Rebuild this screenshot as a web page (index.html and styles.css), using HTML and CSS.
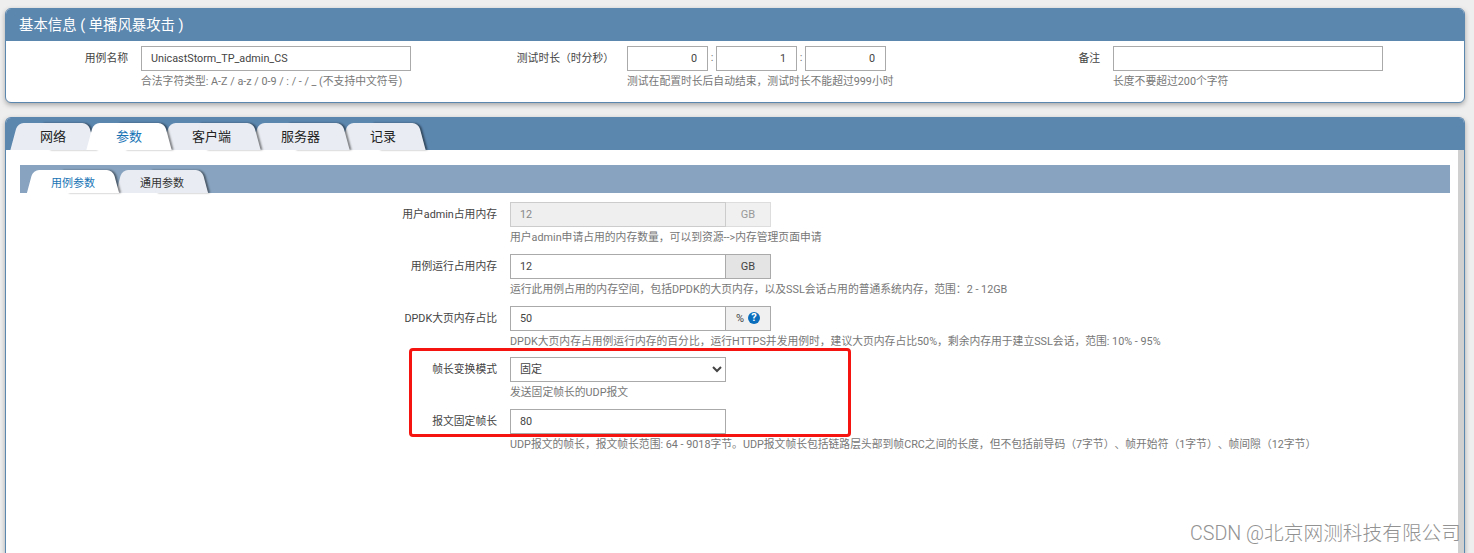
FILE: index.html
```html
<!DOCTYPE html>
<html lang="zh-CN">
<head>
    <meta charset="UTF-8">
    <meta name="viewport" content="width=device-width, initial-scale=1.0">
    <title>基本信息</title>
    <link rel="stylesheet" href="styles.css">
</head>
<body>
    <div class="card">
        <div class="card-title">基本信息 ( 单播风暴攻击 )</div>
        <div class="info-grid">
            <div class="info-field">
                <label class="info-label">用例名称</label>
                <input class="text-input" type="text" value="UnicastStorm_TP_admin_CS">
                <div class="help">合法字符类型: A-Z / a-z / 0-9 / : / - / _ (不支持中文符号)</div>
            </div>
            <div class="info-field">
                <label class="info-label">测试时长（时分秒）</label>
                <div class="time-group">
                    <input class="text-input time-input" type="text" value="0">
                    <span class="time-sep">:</span>
                    <input class="text-input time-input" type="text" value="1">
                    <span class="time-sep">:</span>
                    <input class="text-input time-input" type="text" value="0">
                </div>
                <div class="help">测试在配置时长后自动结束，测试时长不能超过999小时</div>
            </div>
            <div class="info-field">
                <label class="info-label">备注</label>
                <input class="text-input" type="text">
                <div class="help">长度不要超过200个字符</div>
            </div>
        </div>
    </div>

    <div class="card main-card">
        <div class="tabs">
            <a class="tab">网络</a>
            <a class="tab active">参数</a>
            <a class="tab">客户端</a>
            <a class="tab">服务器</a>
            <a class="tab">记录</a>
        </div>
        <div class="tab-body">
            <div class="subtabs">
                <a class="subtab active">用例参数</a>
                <a class="subtab">通用参数</a>
            </div>
            <div class="form">
                <div class="field">
                    <label class="field-label">用户admin占用内存</label>
                    <div class="input-group">
                        <input class="text-input grow" type="text" value="12" disabled>
                        <span class="addon addon-disabled">GB</span>
                    </div>
                    <div class="help field-help">用户admin申请占用的内存数量，可以到资源--&gt;内存管理页面申请</div>
                </div>
                <div class="field">
                    <label class="field-label">用例运行占用内存</label>
                    <div class="input-group">
                        <input class="text-input grow" type="text" value="12">
                        <span class="addon">GB</span>
                    </div>
                    <div class="help field-help">运行此用例占用的内存空间，包括DPDK的大页内存，以及SSL会话占用的普通系统内存，范围：2 - 12GB</div>
                </div>
                <div class="field">
                    <label class="field-label">DPDK大页内存占比</label>
                    <div class="input-group">
                        <input class="text-input grow" type="text" value="50">
                        <span class="addon addon-light">% <span class="help-icon">?</span></span>
                    </div>
                    <div class="help field-help">DPDK大页内存占用例运行内存的百分比，运行HTTPS并发用例时，建议大页内存占比50%，剩余内存用于建立SSL会话，范围: 10% - 95%</div>
                </div>
                <div class="field">
                    <label class="field-label">帧长变换模式</label>
                    <div class="input-group short">
                        <select class="select-input">
                            <option>固定</option>
                        </select>
                    </div>
                    <div class="help field-help">发送固定帧长的UDP报文</div>
                </div>
                <div class="field">
                    <label class="field-label">报文固定帧长</label>
                    <div class="input-group short">
                        <input class="text-input grow" type="text" value="80">
                    </div>
                    <div class="help field-help">UDP报文的帧长，报文帧长范围: 64 - 9018字节。UDP报文帧长包括链路层头部到帧CRC之间的长度，但不包括前导码（7字节）、帧开始符（1字节）、帧间隙（12字节）</div>
                </div>
            </div>
            <div class="scrollbar"></div>
        </div>
    </div>

    <div class="highlight"></div>
    <div class="watermark">CSDN @北京网测科技有限公司</div>
</body>
</html>
```

FILE: styles.css
```css
* {
    box-sizing: border-box;
}
html, body {
    height: 100%;
    overflow: hidden;
}
body {
    position: relative;
    margin: 0;
    padding: 8px 9px 0 5px;
    background-color: #eeeeee;
    color: #444;
    font-family: Roboto, "Noto Sans CJK SC", sans-serif;
    font-size: 11px;
    text-spacing-trim: space-all;
}
.card {
    background: #fff;
    border: 1px solid #5b86ae;
    border-radius: 6px;
    box-shadow: 0 2px 5px rgba(0,0,0,0.3);
    overflow: hidden;
}
.card-title {
    height: 32px;
    padding-left: 13px;
    background: #5b86ae;
    color: #fff;
    font-size: 14.4px;
    line-height: 33px;
}
.info-grid {
    display: grid;
    grid-template-columns: repeat(3, 486px);
    height: 61px;
    padding-top: 5px;
}
.info-field {
    display: grid;
    grid-template-columns: 122px 270px;
    grid-template-rows: 25px auto;
    column-gap: 13px;
}
.info-label, .field-label {
    color: #444;
    font-size: 10.8px;
    line-height: 25px;
    text-align: right;
}
.help {
    grid-column: 2;
    margin-top: 2px;
    color: #777;
    font-size: 10.8px;
    line-height: 18px;
    white-space: nowrap;
}
.text-input {
    width: 100%;
    height: 25px;
    padding: 0 9px;
    border: 1px solid #aaa;
    background: #fff;
    color: #444;
    font-family: inherit;
    font-size: 10.8px;
    outline: none;
}
.text-input:disabled {
    background: #efefef;
    border-color: #ccc;
    color: #888;
}
.time-group {
    display: flex;
    width: 259px;
}
.time-input {
    width: 81px;
    flex: none;
    padding-right: 10px;
    text-align: right;
}
.time-sep {
    width: 8px;
    color: #777;
    line-height: 24px;
    text-align: center;
}
.main-card {
    position: relative;
    height: 436px;
    margin-top: 14px;
    border-bottom: 0;
    border-radius: 6px 6px 0 0;
}
.tabs {
    display: flex;
    align-items: flex-end;
    height: 32px;
    padding-left: 8px;
    background: #5b86ae;
}
.tab {
    position: relative;
    z-index: 1;
    height: 27px;
    margin-right: -2px;
    padding: 0 26px;
    color: #222;
    font-size: 13px;
    line-height: 27px;
}
.tab:nth-child(1) { z-index: 5; }
.tab:nth-child(2) { z-index: 6; color: #1874b5; }
.tab:nth-child(3) { z-index: 4; }
.tab:nth-child(4) { z-index: 3; }
.tab:nth-child(5) { z-index: 2; }

/* slanted tab sides, one skewed half per side */
.tab::before, .tab::after, .subtab::before, .subtab::after {
    content: "";
    position: absolute;
    top: 0;
    bottom: 0;
    width: 60%;
    z-index: -1;
    background: #e9edf3;
}
.tab::before, .subtab::before {
    left: 0;
    border-radius: 6px 0 0 0;
    transform: skewX(-15deg);
}
.tab::after, .subtab::after {
    right: 0;
    border-radius: 0 6px 0 0;
    transform: skewX(15deg);
    box-shadow: 2px 0 2px rgba(0,0,0,0.45);
}
.tab.active::before, .tab.active::after,
.subtab.active::before, .subtab.active::after {
    background: #fff;
}
.tab-body {
    position: relative;
    height: 403px;
    padding: 15px 14px 0;
}
.subtabs {
    display: flex;
    align-items: flex-end;
    height: 28px;
    padding-left: 10px;
    background: #87a3bf;
}
.subtab {
    position: relative;
    z-index: 1;
    height: 23px;
    margin-right: 3px;
    padding: 0 21px;
    color: #333;
    font-size: 11px;
    line-height: 27px;
}
.subtab.active {
    z-index: 2;
    color: #1874b5;
}
.form {
    padding-top: 9px;
}
.field {
    display: grid;
    grid-template-columns: 477px auto;
    grid-template-rows: 25px auto;
    justify-content: start;
    column-gap: 13px;
    height: 51.75px;
}
.input-group {
    display: flex;
    width: 261px;
}
.input-group.short {
    width: 216px;
}
.grow {
    flex: 1;
    min-width: 0;
}
.addon {
    display: flex;
    flex: none;
    align-items: center;
    justify-content: center;
    gap: 4px;
    width: 45px;
    border: 1px solid #aaa;
    border-left: 0;
    background: #e4e4e4;
    color: #444;
    font-size: 11px;
}
.addon-disabled {
    border-color: #ddd;
    background: #f0f0f0;
    color: #999;
}
.addon-light {
    background: #f0f0f0;
}
.help-icon {
    width: 12px;
    height: 12px;
    border-radius: 50%;
    background: #0a6ebd;
    color: #fff;
    font-size: 11px;
    font-weight: bold;
    line-height: 12px;
    text-align: center;
}
.select-input {
    width: 100%;
    height: 25px;
    padding-left: 5px;
    border: 1px solid #aaa;
    border-radius: 0;
    background-color: #fff;
    color: #444;
    font-family: inherit;
    font-size: 11px;
    outline: none;
}
.scrollbar {
    position: absolute;
    top: 0;
    right: 0;
    bottom: 0;
    width: 6px;
    background: #d0d0d0;
}
.highlight {
    position: absolute;
    left: 409px;
    top: 348px;
    width: 442px;
    height: 89px;
    border: 3px solid #f5140f;
    border-radius: 4px;
}
.watermark {
    position: absolute;
    right: 13px;
    bottom: 6px;
    color: #929292;
    font-family: Roboto, "Noto Sans CJK SC", sans-serif;
    font-size: 19.7px;
    font-weight: 300;
    line-height: 26px;
    white-space: nowrap;
}
```
